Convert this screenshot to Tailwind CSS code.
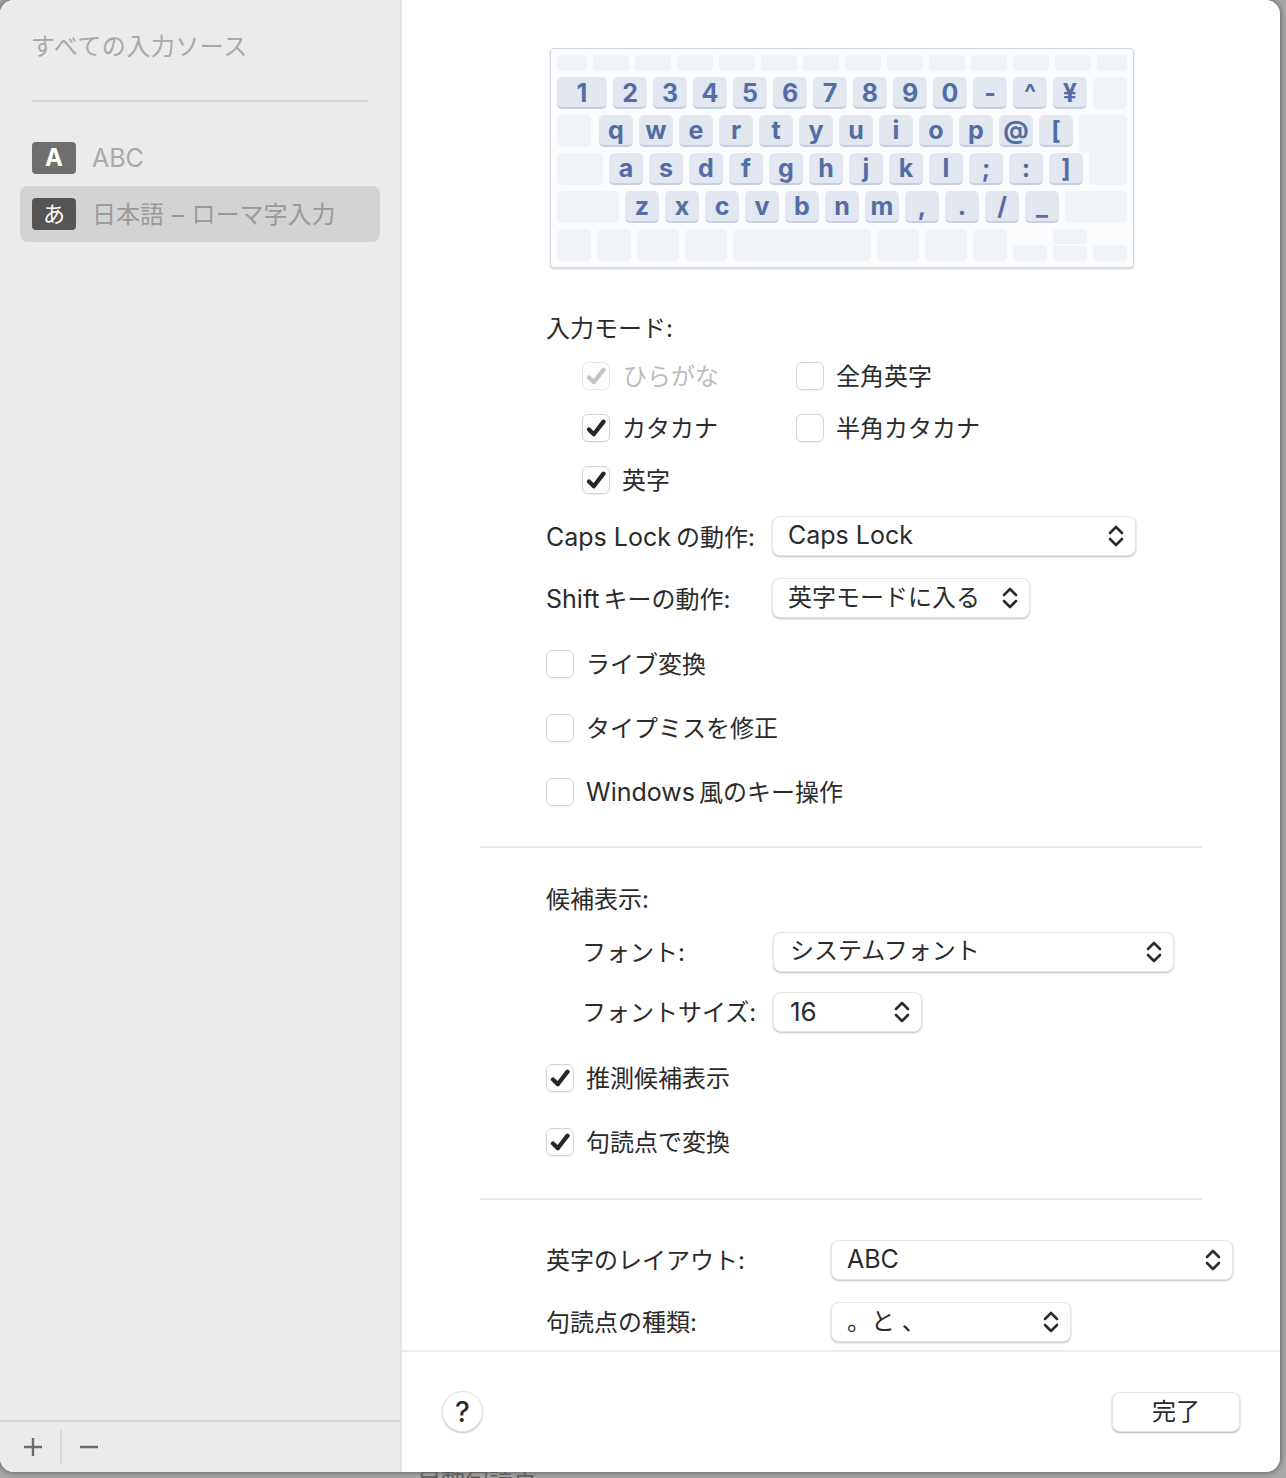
<!DOCTYPE html>
<html lang="ja">
<head>
<meta charset="UTF-8">
<title>入力ソース</title>
<script src="https://cdn.jsdelivr.net/npm/@tailwindcss/browser@4"></script>
</head>
<body class="w-[1286px] h-[1478px] overflow-hidden bg-[#a9a9a9] font-['Inter','Noto_Sans_CJK_JP',sans-serif] text-[24px] text-[#2b2b2b]">

<!-- window -->
<div class="flex w-[1280px] h-[1472px] rounded-[14px] overflow-hidden bg-white shadow-[0_0_6px_rgba(0,0,0,0.55)]">

  <!-- sidebar -->
  <aside class="w-[402px] shrink-0 flex flex-col bg-[#ebebeb] border-r-2 border-[#e2e2e2]">
    <div class="px-[32px] pt-[29px] h-[102px] text-[#a9a9a9]">
      <div class="h-[36px] leading-[36px] tracking-[0.5px] -ml-px">すべての入力ソース</div>
      <div class="mt-[35px] h-[2px] bg-[#d5d5d5] w-[336px]"></div>
    </div>
    <div class="mt-[40px] flex items-center h-[32px] pl-[32px] text-[#a9a9a9]">
      <span class="w-[44px] h-[32px] rounded-[4px] bg-[#6e6e6e] text-white font-bold flex items-center justify-center">A</span>
      <span class="ml-[16px] pt-[2px] text-[25px]">ABC</span>
    </div>
    <div class="mt-[12px] mx-[20px] h-[56px] rounded-[8px] bg-[#d3d3d3] flex items-center pl-[12px] text-[#9a9a9a]">
      <span class="w-[44px] h-[32px] rounded-[4px] bg-[#555555] text-white text-[22px] flex items-center justify-center">あ</span>
      <span class="ml-[16px] pt-[2px]">日本語<span class="mx-[1px]"> – </span>ローマ字入力</span>
    </div>
    <div class="mt-auto h-[52px] border-t-2 border-[#d5d5d5] flex items-center">
      <svg class="ml-[24px]" width="18" height="18" viewBox="0 0 18 18" fill="none" stroke="#6b6b6b" stroke-width="2.4"><path d="M9 0v18M0 9h18"/></svg>
      <div class="ml-[18px] w-[2px] h-[34px] bg-[#d8d8d8]"></div>
      <svg class="ml-[18px]" width="18" height="18" viewBox="0 0 18 18" fill="none" stroke="#6b6b6b" stroke-width="2.4"><path d="M0 9h18"/></svg>
    </div>
  </aside>

  <!-- main -->
  <main class="flex-1 flex flex-col">
    <div class="h-[1352px] shrink-0 border-b-2 border-[#ececec] pt-[48px] pl-[144px] overflow-hidden">

      <!-- keyboard -->
      <div class="ml-[4px] w-[584px] h-[220px] rounded-[4px] bg-[#fbfcfe] border border-[#d4d8de] shadow-[0_1px_2px_rgba(0,0,0,0.2)] px-[6px] pt-[6px] flex flex-col gap-[6px] font-bold text-[25px] text-[#526ea5]">
        <div class="flex gap-[6px] h-[16px]">
          <div class="w-[30px] rounded-[4px] bg-[#f0f3f8]"></div>
          <div class="w-[36px] rounded-[4px] bg-[#f0f3f8]"></div>
          <div class="w-[36px] rounded-[4px] bg-[#f0f3f8]"></div>
          <div class="w-[36px] rounded-[4px] bg-[#f0f3f8]"></div>
          <div class="w-[36px] rounded-[4px] bg-[#f0f3f8]"></div>
          <div class="w-[36px] rounded-[4px] bg-[#f0f3f8]"></div>
          <div class="w-[36px] rounded-[4px] bg-[#f0f3f8]"></div>
          <div class="w-[36px] rounded-[4px] bg-[#f0f3f8]"></div>
          <div class="w-[36px] rounded-[4px] bg-[#f0f3f8]"></div>
          <div class="w-[36px] rounded-[4px] bg-[#f0f3f8]"></div>
          <div class="w-[36px] rounded-[4px] bg-[#f0f3f8]"></div>
          <div class="w-[36px] rounded-[4px] bg-[#f0f3f8]"></div>
          <div class="w-[36px] rounded-[4px] bg-[#f0f3f8]"></div>
          <div class="w-[30px] rounded-[4px] bg-[#f0f3f8]"></div>
        </div>
        <div class="flex gap-[6px] h-[32px]">
          <div class="w-[50px] rounded-[5px] bg-[#e3e7f0] border-b-2 border-[#c6d0e2] flex items-center justify-center pt-[4px]">1</div>
          <div class="w-[34px] rounded-[5px] bg-[#e3e7f0] border-b-2 border-[#c6d0e2] flex items-center justify-center pt-[4px]">2</div>
          <div class="w-[34px] rounded-[5px] bg-[#e3e7f0] border-b-2 border-[#c6d0e2] flex items-center justify-center pt-[4px]">3</div>
          <div class="w-[34px] rounded-[5px] bg-[#e3e7f0] border-b-2 border-[#c6d0e2] flex items-center justify-center pt-[4px]">4</div>
          <div class="w-[34px] rounded-[5px] bg-[#e3e7f0] border-b-2 border-[#c6d0e2] flex items-center justify-center pt-[4px]">5</div>
          <div class="w-[34px] rounded-[5px] bg-[#e3e7f0] border-b-2 border-[#c6d0e2] flex items-center justify-center pt-[4px]">6</div>
          <div class="w-[34px] rounded-[5px] bg-[#e3e7f0] border-b-2 border-[#c6d0e2] flex items-center justify-center pt-[4px]">7</div>
          <div class="w-[34px] rounded-[5px] bg-[#e3e7f0] border-b-2 border-[#c6d0e2] flex items-center justify-center pt-[4px]">8</div>
          <div class="w-[34px] rounded-[5px] bg-[#e3e7f0] border-b-2 border-[#c6d0e2] flex items-center justify-center pt-[4px]">9</div>
          <div class="w-[34px] rounded-[5px] bg-[#e3e7f0] border-b-2 border-[#c6d0e2] flex items-center justify-center pt-[4px]">0</div>
          <div class="w-[34px] rounded-[5px] bg-[#e3e7f0] border-b-2 border-[#c6d0e2] flex items-center justify-center pt-[4px]">-</div>
          <div class="w-[34px] rounded-[5px] bg-[#e3e7f0] border-b-2 border-[#c6d0e2] flex items-center justify-center pt-[4px]">^</div>
          <div class="w-[34px] rounded-[5px] bg-[#e3e7f0] border-b-2 border-[#c6d0e2] flex items-center justify-center pt-[4px]">¥</div>
          <div class="w-[34px] rounded-[5px] bg-[#f0f3f8]"></div>
        </div>
        <div class="flex gap-[6px] h-[32px]">
          <div class="w-[34px] mr-[2px] rounded-[5px] bg-[#f0f3f8]"></div>
          <div class="w-[34px] rounded-[5px] bg-[#e3e7f0] border-b-2 border-[#c6d0e2] flex items-center justify-center pt-[2px]">q</div>
          <div class="w-[34px] rounded-[5px] bg-[#e3e7f0] border-b-2 border-[#c6d0e2] flex items-center justify-center pt-[2px]">w</div>
          <div class="w-[34px] rounded-[5px] bg-[#e3e7f0] border-b-2 border-[#c6d0e2] flex items-center justify-center pt-[2px]">e</div>
          <div class="w-[34px] rounded-[5px] bg-[#e3e7f0] border-b-2 border-[#c6d0e2] flex items-center justify-center pt-[2px]">r</div>
          <div class="w-[34px] rounded-[5px] bg-[#e3e7f0] border-b-2 border-[#c6d0e2] flex items-center justify-center pt-[2px]">t</div>
          <div class="w-[34px] rounded-[5px] bg-[#e3e7f0] border-b-2 border-[#c6d0e2] flex items-center justify-center pt-[2px]">y</div>
          <div class="w-[34px] rounded-[5px] bg-[#e3e7f0] border-b-2 border-[#c6d0e2] flex items-center justify-center pt-[2px]">u</div>
          <div class="w-[34px] rounded-[5px] bg-[#e3e7f0] border-b-2 border-[#c6d0e2] flex items-center justify-center pt-[2px]">i</div>
          <div class="w-[34px] rounded-[5px] bg-[#e3e7f0] border-b-2 border-[#c6d0e2] flex items-center justify-center pt-[2px]">o</div>
          <div class="w-[34px] rounded-[5px] bg-[#e3e7f0] border-b-2 border-[#c6d0e2] flex items-center justify-center pt-[2px]">p</div>
          <div class="w-[34px] rounded-[5px] bg-[#e3e7f0] border-b-2 border-[#c6d0e2] flex items-center justify-center pt-[2px]">@</div>
          <div class="w-[34px] rounded-[5px] bg-[#e3e7f0] border-b-2 border-[#c6d0e2] flex items-center justify-center pt-[2px]">[</div>
          <div class="w-[48px] h-[38px] rounded-[5px] rounded-br-none bg-[#f0f3f8]"></div>
        </div>
        <div class="flex gap-[6px] h-[32px]">
          <div class="w-[46px] rounded-[5px] bg-[#f0f3f8]"></div>
          <div class="w-[34px] rounded-[5px] bg-[#e3e7f0] border-b-2 border-[#c6d0e2] flex items-center justify-center pt-[2px]">a</div>
          <div class="w-[34px] rounded-[5px] bg-[#e3e7f0] border-b-2 border-[#c6d0e2] flex items-center justify-center pt-[2px]">s</div>
          <div class="w-[34px] rounded-[5px] bg-[#e3e7f0] border-b-2 border-[#c6d0e2] flex items-center justify-center pt-[2px]">d</div>
          <div class="w-[34px] rounded-[5px] bg-[#e3e7f0] border-b-2 border-[#c6d0e2] flex items-center justify-center pt-[2px]">f</div>
          <div class="w-[34px] rounded-[5px] bg-[#e3e7f0] border-b-2 border-[#c6d0e2] flex items-center justify-center pt-[2px]">g</div>
          <div class="w-[34px] rounded-[5px] bg-[#e3e7f0] border-b-2 border-[#c6d0e2] flex items-center justify-center pt-[2px]">h</div>
          <div class="w-[34px] rounded-[5px] bg-[#e3e7f0] border-b-2 border-[#c6d0e2] flex items-center justify-center pt-[2px]">j</div>
          <div class="w-[34px] rounded-[5px] bg-[#e3e7f0] border-b-2 border-[#c6d0e2] flex items-center justify-center pt-[2px]">k</div>
          <div class="w-[34px] rounded-[5px] bg-[#e3e7f0] border-b-2 border-[#c6d0e2] flex items-center justify-center pt-[2px]">l</div>
          <div class="w-[34px] rounded-[5px] bg-[#e3e7f0] border-b-2 border-[#c6d0e2] flex items-center justify-center pt-[2px]">;</div>
          <div class="w-[34px] rounded-[5px] bg-[#e3e7f0] border-b-2 border-[#c6d0e2] flex items-center justify-center pt-[2px]">:</div>
          <div class="w-[34px] rounded-[5px] bg-[#e3e7f0] border-b-2 border-[#c6d0e2] flex items-center justify-center pt-[2px]">]</div>
          <div class="w-[38px] rounded-[5px] rounded-t-none bg-[#f0f3f8]"></div>
        </div>
        <div class="flex gap-[6px] h-[32px]">
          <div class="w-[62px] rounded-[5px] bg-[#f0f3f8]"></div>
          <div class="w-[34px] rounded-[5px] bg-[#e3e7f0] border-b-2 border-[#c6d0e2] flex items-center justify-center pt-[2px]">z</div>
          <div class="w-[34px] rounded-[5px] bg-[#e3e7f0] border-b-2 border-[#c6d0e2] flex items-center justify-center pt-[2px]">x</div>
          <div class="w-[34px] rounded-[5px] bg-[#e3e7f0] border-b-2 border-[#c6d0e2] flex items-center justify-center pt-[2px]">c</div>
          <div class="w-[34px] rounded-[5px] bg-[#e3e7f0] border-b-2 border-[#c6d0e2] flex items-center justify-center pt-[2px]">v</div>
          <div class="w-[34px] rounded-[5px] bg-[#e3e7f0] border-b-2 border-[#c6d0e2] flex items-center justify-center pt-[2px]">b</div>
          <div class="w-[34px] rounded-[5px] bg-[#e3e7f0] border-b-2 border-[#c6d0e2] flex items-center justify-center pt-[2px]">n</div>
          <div class="w-[34px] rounded-[5px] bg-[#e3e7f0] border-b-2 border-[#c6d0e2] flex items-center justify-center pt-[2px]">m</div>
          <div class="w-[34px] rounded-[5px] bg-[#e3e7f0] border-b-2 border-[#c6d0e2] flex items-center justify-center pt-[2px]">,</div>
          <div class="w-[34px] rounded-[5px] bg-[#e3e7f0] border-b-2 border-[#c6d0e2] flex items-center justify-center pt-[2px]">.</div>
          <div class="w-[34px] rounded-[5px] bg-[#e3e7f0] border-b-2 border-[#c6d0e2] flex items-center justify-center pt-[2px]">/</div>
          <div class="w-[34px] rounded-[5px] bg-[#e3e7f0] border-b-2 border-[#c6d0e2] flex items-center justify-center pt-[2px]">_</div>
          <div class="w-[62px] rounded-[5px] bg-[#f0f3f8]"></div>
        </div>
        <div class="flex gap-[6px] h-[32px]">
          <div class="w-[34px] rounded-[5px] bg-[#f0f3f8]"></div>
          <div class="w-[34px] rounded-[5px] bg-[#f0f3f8]"></div>
          <div class="w-[42px] rounded-[5px] bg-[#f0f3f8]"></div>
          <div class="w-[42px] rounded-[5px] bg-[#f0f3f8]"></div>
          <div class="w-[138px] rounded-[5px] bg-[#f0f3f8]"></div>
          <div class="w-[42px] rounded-[5px] bg-[#f0f3f8]"></div>
          <div class="w-[42px] rounded-[5px] bg-[#f0f3f8]"></div>
          <div class="w-[34px] rounded-[5px] bg-[#f0f3f8]"></div>
          <div class="w-[34px] h-[16px] mt-[16px] rounded-[4px] bg-[#f0f3f8]"></div>
          <div class="w-[34px] flex flex-col gap-[2px]">
            <div class="h-[15px] rounded-t-[4px] bg-[#f0f3f8]"></div>
            <div class="h-[15px] rounded-b-[4px] bg-[#f0f3f8]"></div>
          </div>
          <div class="w-[34px] h-[16px] mt-[16px] rounded-[4px] bg-[#f0f3f8]"></div>
        </div>
      </div>

      <!-- input modes -->
      <div class="mt-[40px] h-[40px] flex items-center pt-[2px]">入力モード:</div>
      <div class="mt-[14px] ml-[36px] grid grid-cols-[214px_auto] gap-y-[24px] justify-start">
        <div class="flex items-center h-[28px] text-[#bdbdbd]">
          <span class="w-[28px] h-[28px] rounded-[6px] border border-[#e4e4e4] flex items-center justify-center"><svg width="20" height="18" viewBox="0 0 20 18" fill="none" stroke="#c4c4c4" stroke-width="4.2" stroke-linecap="round" stroke-linejoin="round"><path d="M3 10.5L7.8 15.2 17.5 2.6"/></svg></span>
          <span class="ml-[13px] pt-[2px]">ひらがな</span>
        </div>
        <div class="flex items-center h-[28px]">
          <span class="w-[28px] h-[28px] rounded-[6px] border border-[#d4d4d4] shadow-[0_1px_1px_rgba(0,0,0,0.06)]"></span>
          <span class="ml-[12px] pt-[2px]">全角英字</span>
        </div>
        <div class="flex items-center h-[28px]">
          <span class="w-[28px] h-[28px] rounded-[6px] border border-[#d4d4d4] shadow-[0_1px_1px_rgba(0,0,0,0.06)] flex items-center justify-center"><svg width="20" height="18" viewBox="0 0 20 18" fill="none" stroke="#262626" stroke-width="4.2" stroke-linecap="round" stroke-linejoin="round"><path d="M3 10.5L7.8 15.2 17.5 2.6"/></svg></span>
          <span class="ml-[12px] pt-[2px]">カタカナ</span>
        </div>
        <div class="flex items-center h-[28px]">
          <span class="w-[28px] h-[28px] rounded-[6px] border border-[#d4d4d4] shadow-[0_1px_1px_rgba(0,0,0,0.06)]"></span>
          <span class="ml-[12px] pt-[2px]">半角カタカナ</span>
        </div>
        <div class="flex items-center h-[28px]">
          <span class="w-[28px] h-[28px] rounded-[6px] border border-[#d4d4d4] shadow-[0_1px_1px_rgba(0,0,0,0.06)] flex items-center justify-center"><svg width="20" height="18" viewBox="0 0 20 18" fill="none" stroke="#262626" stroke-width="4.2" stroke-linecap="round" stroke-linejoin="round"><path d="M3 10.5L7.8 15.2 17.5 2.6"/></svg></span>
          <span class="ml-[12px] pt-[2px]">英字</span>
        </div>
      </div>

      <div class="mt-[22px] flex items-center h-[40px]">
        <span class="w-[226px] pt-[3px]"><span class="text-[25px] mr-[5px]">Caps Lock</span>の動作:</span>
        <div class="w-[364px] h-[40px] rounded-[8px] bg-white border border-[#e6e6e6] shadow-[0_1px_2px_rgba(0,0,0,0.25)] flex items-center justify-between pl-[15px] pr-[11px]">
          <span class="-mt-[1px] text-[25px]">Caps Lock</span>
          <svg width="16" height="24" viewBox="0 0 16 24" fill="none" stroke="#2b2b2b" stroke-width="2.6" stroke-linecap="round" stroke-linejoin="round"><path d="M2 9l6-6 6 6M2 15l6 6 6-6"/></svg>
        </div>
      </div>
      <div class="mt-[22px] flex items-center h-[40px]">
        <span class="w-[226px] pt-[3px]"><span class="text-[25px] mr-[4px]">Shift</span>キーの動作:</span>
        <div class="w-[258px] h-[40px] rounded-[8px] bg-white border border-[#e6e6e6] shadow-[0_1px_2px_rgba(0,0,0,0.25)] flex items-center justify-between pl-[15px] pr-[11px]">
          <span class="-mt-[1px]">英字モードに入る</span>
          <svg width="16" height="24" viewBox="0 0 16 24" fill="none" stroke="#2b2b2b" stroke-width="2.6" stroke-linecap="round" stroke-linejoin="round"><path d="M2 9l6-6 6 6M2 15l6 6 6-6"/></svg>
        </div>
      </div>

      <div class="mt-[32px] flex items-center h-[28px]">
        <span class="w-[28px] h-[28px] rounded-[6px] border border-[#d4d4d4] shadow-[0_1px_1px_rgba(0,0,0,0.06)]"></span>
        <span class="ml-[12px] pt-[2px]">ライブ変換</span>
      </div>
      <div class="mt-[36px] flex items-center h-[28px]">
        <span class="w-[28px] h-[28px] rounded-[6px] border border-[#d4d4d4] shadow-[0_1px_1px_rgba(0,0,0,0.06)]"></span>
        <span class="ml-[12px] pt-[2px]">タイプミスを修正</span>
      </div>
      <div class="mt-[36px] flex items-center h-[28px]">
        <span class="w-[28px] h-[28px] rounded-[6px] border border-[#d4d4d4] shadow-[0_1px_1px_rgba(0,0,0,0.06)]"></span>
        <span class="ml-[12px] pt-[2px]"><span class="text-[25px] mr-[4px]">Windows</span>風のキー操作</span>
      </div>

      <div class="mt-[40px] -ml-[66px] w-[722px] h-[2px] bg-[#e6e6e6]"></div>

      <div class="mt-[31px] h-[40px] flex items-center pt-[2px]">候補表示:</div>
      <div class="mt-[13px] ml-[36px] flex items-center h-[40px]">
        <span class="w-[191px] pt-[2px]">フォント:</span>
        <div class="w-[401px] h-[40px] rounded-[8px] bg-white border border-[#e6e6e6] shadow-[0_1px_2px_rgba(0,0,0,0.25)] flex items-center justify-between pl-[16px] pr-[11px]">
          <span class="-mt-[2px]">システムフォント</span>
          <svg width="16" height="24" viewBox="0 0 16 24" fill="none" stroke="#2b2b2b" stroke-width="2.6" stroke-linecap="round" stroke-linejoin="round"><path d="M2 9l6-6 6 6M2 15l6 6 6-6"/></svg>
        </div>
      </div>
      <div class="mt-[20px] ml-[36px] flex items-center h-[40px]">
        <span class="w-[191px] pt-[2px]">フォントサイズ:</span>
        <div class="w-[149px] h-[40px] rounded-[8px] bg-white border border-[#e6e6e6] shadow-[0_1px_2px_rgba(0,0,0,0.25)] flex items-center justify-between pl-[16px] pr-[11px]">
          <span class="-mt-[1px] text-[26px]">16</span>
          <svg width="16" height="24" viewBox="0 0 16 24" fill="none" stroke="#2b2b2b" stroke-width="2.6" stroke-linecap="round" stroke-linejoin="round"><path d="M2 9l6-6 6 6M2 15l6 6 6-6"/></svg>
        </div>
      </div>

      <div class="mt-[32px] flex items-center h-[28px]">
        <span class="w-[28px] h-[28px] rounded-[6px] border border-[#d4d4d4] shadow-[0_1px_1px_rgba(0,0,0,0.06)] flex items-center justify-center"><svg width="20" height="18" viewBox="0 0 20 18" fill="none" stroke="#262626" stroke-width="4.2" stroke-linecap="round" stroke-linejoin="round"><path d="M3 10.5L7.8 15.2 17.5 2.6"/></svg></span>
        <span class="ml-[12px] pt-[2px]">推測候補表示</span>
      </div>
      <div class="mt-[36px] flex items-center h-[28px]">
        <span class="w-[28px] h-[28px] rounded-[6px] border border-[#d4d4d4] shadow-[0_1px_1px_rgba(0,0,0,0.06)] flex items-center justify-center"><svg width="20" height="18" viewBox="0 0 20 18" fill="none" stroke="#262626" stroke-width="4.2" stroke-linecap="round" stroke-linejoin="round"><path d="M3 10.5L7.8 15.2 17.5 2.6"/></svg></span>
        <span class="ml-[12px] pt-[2px]">句読点で変換</span>
      </div>

      <div class="mt-[42px] -ml-[66px] w-[722px] h-[2px] bg-[#e6e6e6]"></div>

      <div class="mt-[40px] flex items-center h-[40px]">
        <span class="w-[285px] pt-[2px]">英字のレイアウト:</span>
        <div class="w-[402px] h-[40px] rounded-[8px] bg-white border border-[#e6e6e6] shadow-[0_1px_2px_rgba(0,0,0,0.25)] flex items-center justify-between pl-[15px] pr-[11px]">
          <span class="-mt-[1px] text-[25px]">ABC</span>
          <svg width="16" height="24" viewBox="0 0 16 24" fill="none" stroke="#2b2b2b" stroke-width="2.6" stroke-linecap="round" stroke-linejoin="round"><path d="M2 9l6-6 6 6M2 15l6 6 6-6"/></svg>
        </div>
      </div>
      <div class="mt-[22px] flex items-center h-[40px]">
        <span class="w-[285px] pt-[2px]">句読点の種類:</span>
        <div class="w-[240px] h-[40px] rounded-[8px] bg-white border border-[#e6e6e6] shadow-[0_1px_2px_rgba(0,0,0,0.25)] flex items-center justify-between pl-[15px] pr-[11px]">
          <span class="-mt-[1px]">。と 、</span>
          <svg width="16" height="24" viewBox="0 0 16 24" fill="none" stroke="#2b2b2b" stroke-width="2.6" stroke-linecap="round" stroke-linejoin="round"><path d="M2 9l6-6 6 6M2 15l6 6 6-6"/></svg>
        </div>
      </div>
    </div>

    <!-- footer -->
    <div class="flex-1 flex items-center justify-between pl-[40px] pr-[40px]">
      <div class="w-[41px] h-[41px] rounded-full bg-white border border-[#e4e4e4] shadow-[0_1px_2px_rgba(0,0,0,0.25)] flex items-center justify-center font-medium text-[28px] -mt-px">?</div>
      <div class="w-[128px] h-[40px] rounded-[8px] bg-white border border-[#e6e6e6] shadow-[0_1px_2px_rgba(0,0,0,0.3)] flex items-center justify-center">完了</div>
    </div>
  </main>
</div>

<!-- desktop behind the sheet, only the top of a label shows -->
<div class="h-[6px] overflow-hidden pl-[417px] text-[#5f5f5f] leading-[20px]"><div class="-mt-[2px]">自動句読点</div></div>

</body>
</html>
